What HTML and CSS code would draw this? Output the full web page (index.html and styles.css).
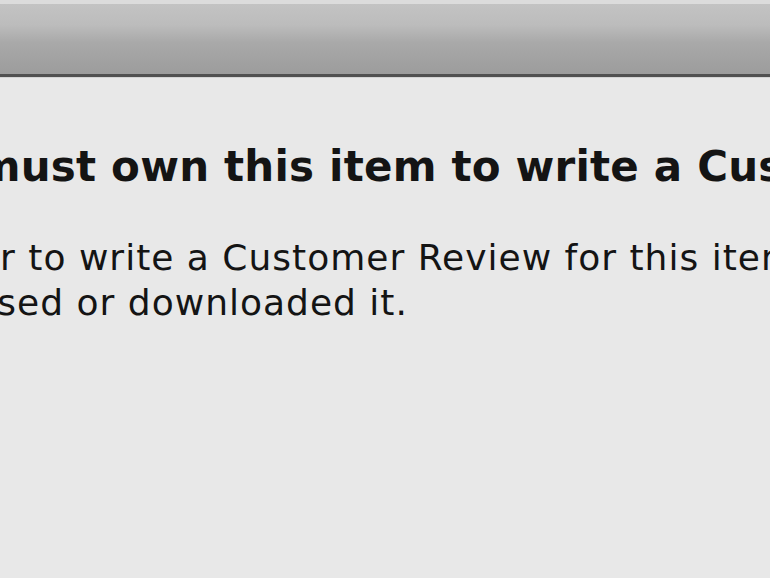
FILE: index.html
```html
<!DOCTYPE html>
<html>
<head>
<meta charset="utf-8">
<link rel="stylesheet" href="styles.css">
</head>
<body>
<div class="window">
  <div class="titlebar"></div>
  <div class="content">
    <h1 class="heading">You must own this item to write a Customer Review.</h1>
    <p class="message">In order to write a Customer Review for this item, you must have<br>purchased or downloaded it.</p>
  </div>
</div>
</body>
</html>
```

FILE: styles.css
```css
html, body {
  margin: 0;
  padding: 0;
  background: #e8e8e8;
  overflow: hidden;
}
.window {
  width: 770px;
  height: 578px;
  overflow: hidden;
  background: #e8e8e8;
  font-family: "DejaVu Sans", Verdana, sans-serif;
  color: #141414;
}
.titlebar {
  height: 70px;
  border-top: 4px solid #dcdcdc;
  background: linear-gradient(#c3c3c3, #bcbcbc 30%, #a9a9a9 55%, #9c9c9c);
  border-bottom: 3px solid #505050;
  box-shadow: 0 1px 0 #d4d4d4;
}
.content {
  padding-top: 1px;
}
.heading {
  margin: 66px 0 0 -124px;
  font-size: 42px;
  font-weight: bold;
  letter-spacing: 0.2px;
  line-height: 46px;
  white-space: nowrap;
}
.message {
  margin: 45px 0 0 -133px;
  font-size: 36px;
  letter-spacing: 1px;
  line-height: 45px;
  white-space: nowrap;
}
```
